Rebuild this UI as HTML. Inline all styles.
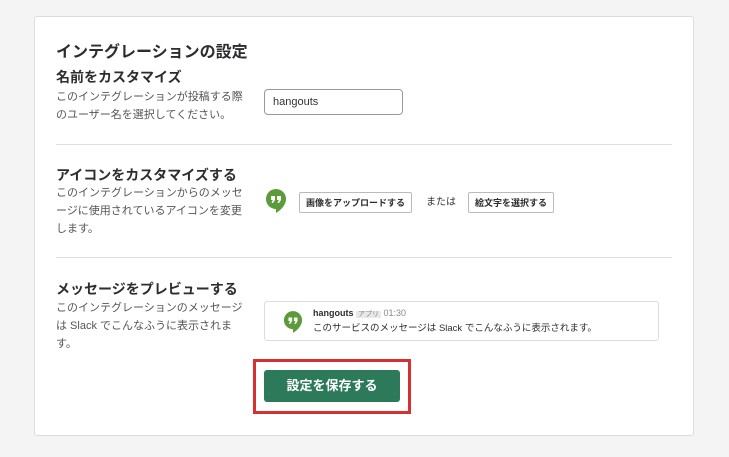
<!DOCTYPE html>
<html><head><meta charset="utf-8"><style>
*{margin:0;padding:0;box-sizing:border-box}
body{width:729px;height:457px;background:#f4f4f4;font-family:"Liberation Sans","Noto Sans CJK JP",sans-serif;color:#2c2d30;position:relative;overflow:hidden}
.card{position:absolute;left:34px;top:16px;width:660px;height:420px;background:#fff;border:1px solid #ddd;border-radius:3px}
.a{position:absolute}
h1{font-size:16px;font-weight:bold}
h2{font-size:14px;font-weight:bold}
.d{font-size:11px;line-height:18px;color:#555}
.hr{position:absolute;left:56px;width:616px;height:1px;background:#e0e0e0}
.btn{font-size:9px;font-weight:bold;border:1px solid #bbb;border-radius:2px;padding:3px 6px;background:#fff}
</style></head><body>
<div class="card"></div>
<h1 class="a" style="left:56px;top:38px">インテグレーションの設定</h1>
<h2 class="a" style="left:56px;top:67px">名前をカスタマイズ</h2>
<div class="a d" style="left:56px;top:88px">このインテグレーションが投稿する際<br>のユーザー名を選択してください。</div>
<div class="a" style="left:264px;top:89px;width:139px;height:26px;border:1px solid #999;border-radius:4px;font-size:11px;padding:6px 8px;color:#333">hangouts</div>
<div class="hr" style="top:144px"></div>
<h2 class="a" style="left:56px;top:165px">アイコンをカスタマイズする</h2>
<div class="a d" style="left:56px;top:184px">このインテグレーションからのメッセ<br>ージに使用されているアイコンを変更<br>します。</div>
<svg class="a" style="left:265px;top:188px" width="22" height="26" viewBox="0 0 22 26"><path d="M11 1a10 10 0 0 0-10 10c0 5.5 4.5 10 10 10v4c5-3 10-8 10-14A10 10 0 0 0 11 1z" fill="#5c9b3a"/><path d="M6 8h4v4l-2 3h-1.5l1.3-3H6zM12 8h4v4l-2 3h-1.5l1.3-3H12z" fill="#fff"/></svg>
<div class="a btn" style="left:299px;top:192px">画像をアップロードする</div>
<div class="a" style="left:426px;top:193px;font-size:10px;color:#333">または</div>
<div class="a btn" style="left:468px;top:192px">絵文字を選択する</div>
<div class="hr" style="top:257px"></div>
<h2 class="a" style="left:56px;top:279px">メッセージをプレビューする</h2>
<div class="a d" style="left:56px;top:299px">このインテグレーションのメッセージ<br>は Slack でこんなふうに表示されま<br>す。</div>
<div class="a" style="left:264px;top:301px;width:395px;height:40px;border:1px solid #ddd;border-radius:3px"></div>
<svg class="a" style="left:283px;top:310px" width="20" height="24" viewBox="0 0 22 26"><path d="M11 1a10 10 0 0 0-10 10c0 5.5 4.5 10 10 10v4c5-3 10-8 10-14A10 10 0 0 0 11 1z" fill="#5c9b3a"/><path d="M6 8h4v4l-2 3h-1.5l1.3-3H6zM12 8h4v4l-2 3h-1.5l1.3-3H12z" fill="#fff"/></svg>
<div class="a" style="left:313px;top:308px;font-size:9px"><b>hangouts</b> <span style="background:#e8e8e8;color:#888;font-size:7px;padding:0 2px">アプリ</span> <span style="color:#888">01:30</span></div>
<div class="a" style="left:313px;top:320px;font-size:9.5px">このサービスのメッセージは Slack でこんなふうに表示されます。</div>
<div class="a" style="left:253px;top:359px;width:158px;height:55px;border:3px solid #d63030"></div>
<div class="a" style="left:264px;top:370px;width:136px;height:32px;background:#2d7a5a;border-radius:3px;color:#fff;font-size:13px;font-weight:bold;text-align:center;line-height:32px">設定を保存する</div>
</body></html>
